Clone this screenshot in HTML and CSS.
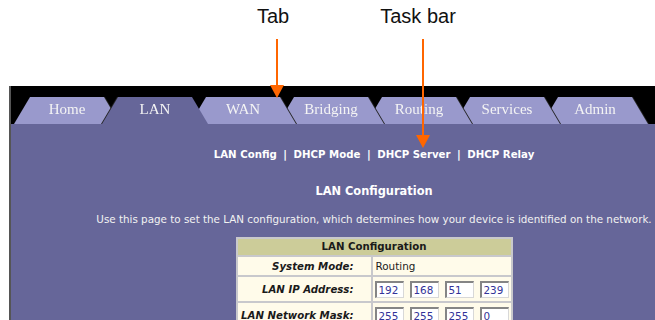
FILE: index.html
```html
<!DOCTYPE html>
<html>

<head>
  <title>LAN Configuration</title>
  <link rel="stylesheet" href="styles.css">
</head>

<body>

  <div class="callouts">
    <span class="callout tab-label">Tab</span>
    <span class="callout task-label">Task bar</span>
  </div>

  <div class="screen">
    <nav class="tabs">
      <a class="tab"><span class="face">Home</span></a>
      <a class="tab active"><span class="face">LAN</span></a>
      <a class="tab"><span class="face">WAN</span></a>
      <a class="tab"><span class="face">Bridging</span></a>
      <a class="tab"><span class="face">Routing</span></a>
      <a class="tab"><span class="face">Services</span></a>
      <a class="tab"><span class="face">Admin</span></a>
    </nav>

    <div class="panel">
      <div class="taskbar">
        <a>LAN Config</a> <span class="sep">|</span> <a>DHCP Mode</a> <span class="sep">|</span>
        <a>DHCP Server</a> <span class="sep">|</span> <a>DHCP Relay</a>
      </div>

      <h2>LAN Configuration</h2>
      <p class="intro">Use this page to set the LAN configuration, which determines how your device is identified on the network.</p>

      <table class="config">
        <tr>
          <th colspan="2">LAN Configuration</th>
        </tr>
        <tr class="row-short">
          <td class="label">System Mode:</td>
          <td class="value">Routing</td>
        </tr>
        <tr>
          <td class="label">LAN IP Address:</td>
          <td class="value">
            <div class="octets">
              <input type="text" value="192">
              <input type="text" value="168">
              <input type="text" value="51">
              <input type="text" value="239">
            </div>
          </td>
        </tr>
        <tr>
          <td class="label">LAN Network Mask:</td>
          <td class="value">
            <div class="octets">
              <input type="text" value="255">
              <input type="text" value="255">
              <input type="text" value="255">
              <input type="text" value="0">
            </div>
          </td>
        </tr>
      </table>
    </div>
  </div>

  <svg class="arrows" width="655" height="320" viewBox="0 0 655 320">
    <line x1="277" y1="39" x2="277" y2="88" stroke="#ff6600" stroke-width="2" />
    <polygon points="270,85 284,85 277,98" fill="#ff6600" />
    <line x1="423" y1="39" x2="423" y2="137" stroke="#ff6600" stroke-width="2" />
    <polygon points="416,135 430,135 423,148" fill="#ff6600" />
  </svg>

</body>

</html>
```

FILE: styles.css
```css
body {
  margin: 0;
  padding: 0;
  background: #fff;
  overflow: hidden;
  position: relative;
  height: 320px;
}

.callouts {
  height: 86px;
  box-sizing: border-box;
  padding: 5px 0 0 257px;
  display: flex;
  gap: 91px;
  font-family: "Liberation Sans", Arial, sans-serif;
  font-size: 20px;
  line-height: 23px;
  color: #111;
}

.screen {
  margin-left: 9px;
  width: 726px;
  border-left: 2px solid #555;
}

/* tab row */
.tabs {
  display: flex;
  padding: 11px 0 0 3px;
  background: #000;
}

.tab {
  width: 106px;
  height: 27px;
  flex: none;
  margin-right: -18px;
  filter: drop-shadow(1px 0 0 #222);
}

.tab .face {
  display: block;
  height: 100%;
  background: #9999cc;
  clip-path: polygon(16px 0, 90px 0, 106px 100%, 0 100%);
  color: #f4f4f4;
  font-family: "Liberation Serif", "Times New Roman", serif;
  font-size: 15px;
  line-height: 24px;
  text-align: center;
}

.tab:nth-child(1) { z-index: 7; }
.tab:nth-child(2) { z-index: 6; }
.tab:nth-child(3) { z-index: 5; }
.tab:nth-child(4) { z-index: 4; }
.tab:nth-child(5) { z-index: 3; }
.tab:nth-child(6) { z-index: 2; }
.tab:nth-child(7) { z-index: 1; }

.tab.active {
  z-index: 10;
  filter: drop-shadow(-1px 0 0 #222);
}

.tab.active .face {
  background: #666699;
}

/* content panel */
.panel {
  background: #666699;
  padding: 24px 0 30px;
  text-align: center;
  color: #fff;
  font-family: "DejaVu Sans", Verdana, sans-serif;
}

.taskbar {
  font-size: 10.2px;
  font-weight: bold;
  line-height: 14px;
}

.taskbar .sep {
  margin: 0 3px;
}

.panel h2 {
  margin: 22px 0 0;
  font-size: 11.4px;
  line-height: 14px;
}

.intro {
  margin: 15px 0 11px;
  font-size: 10.35px;
  line-height: 13px;
  color: #f2f2f2;
}

/* config table */
.config {
  margin: 0 auto;
  border-collapse: separate;
  border-spacing: 2px;
  background: #c8c8cc;
  color: #1a1a1a;
  font-size: 10.2px;
}

.config th {
  height: 16px;
  padding: 0;
  background: #cccc99;
  font-weight: bold;
  line-height: 16px;
}

.config td {
  height: 24px;
  padding: 0;
  background: #fffbea;
}

.config .row-short td {
  height: 18px;
}

.config .label {
  width: 116px;
  padding-right: 17px;
  text-align: right;
  font-weight: bold;
  font-style: italic;
  white-space: nowrap;
}

.config .value {
  width: 135px;
  padding-left: 3px;
  text-align: left;
  font-size: 10.4px;
}

.octets {
  display: flex;
  gap: 6px;
  margin-left: -1px;
}

.octets input {
  width: 29px;
  height: 17px;
  box-sizing: border-box;
  margin: 0;
  padding: 0 0 0 2px;
  border-style: solid;
  border-width: 2px 1px 1px 2px;
  border-color: #858585 #d8d8d8 #d8d8d8 #858585;
  background: #fff;
  color: #333399;
  font-family: "DejaVu Sans", Verdana, sans-serif;
  font-size: 10.4px;
}

.arrows {
  position: absolute;
  top: 0;
  left: 0;
  z-index: 20;
  pointer-events: none;
}
```
